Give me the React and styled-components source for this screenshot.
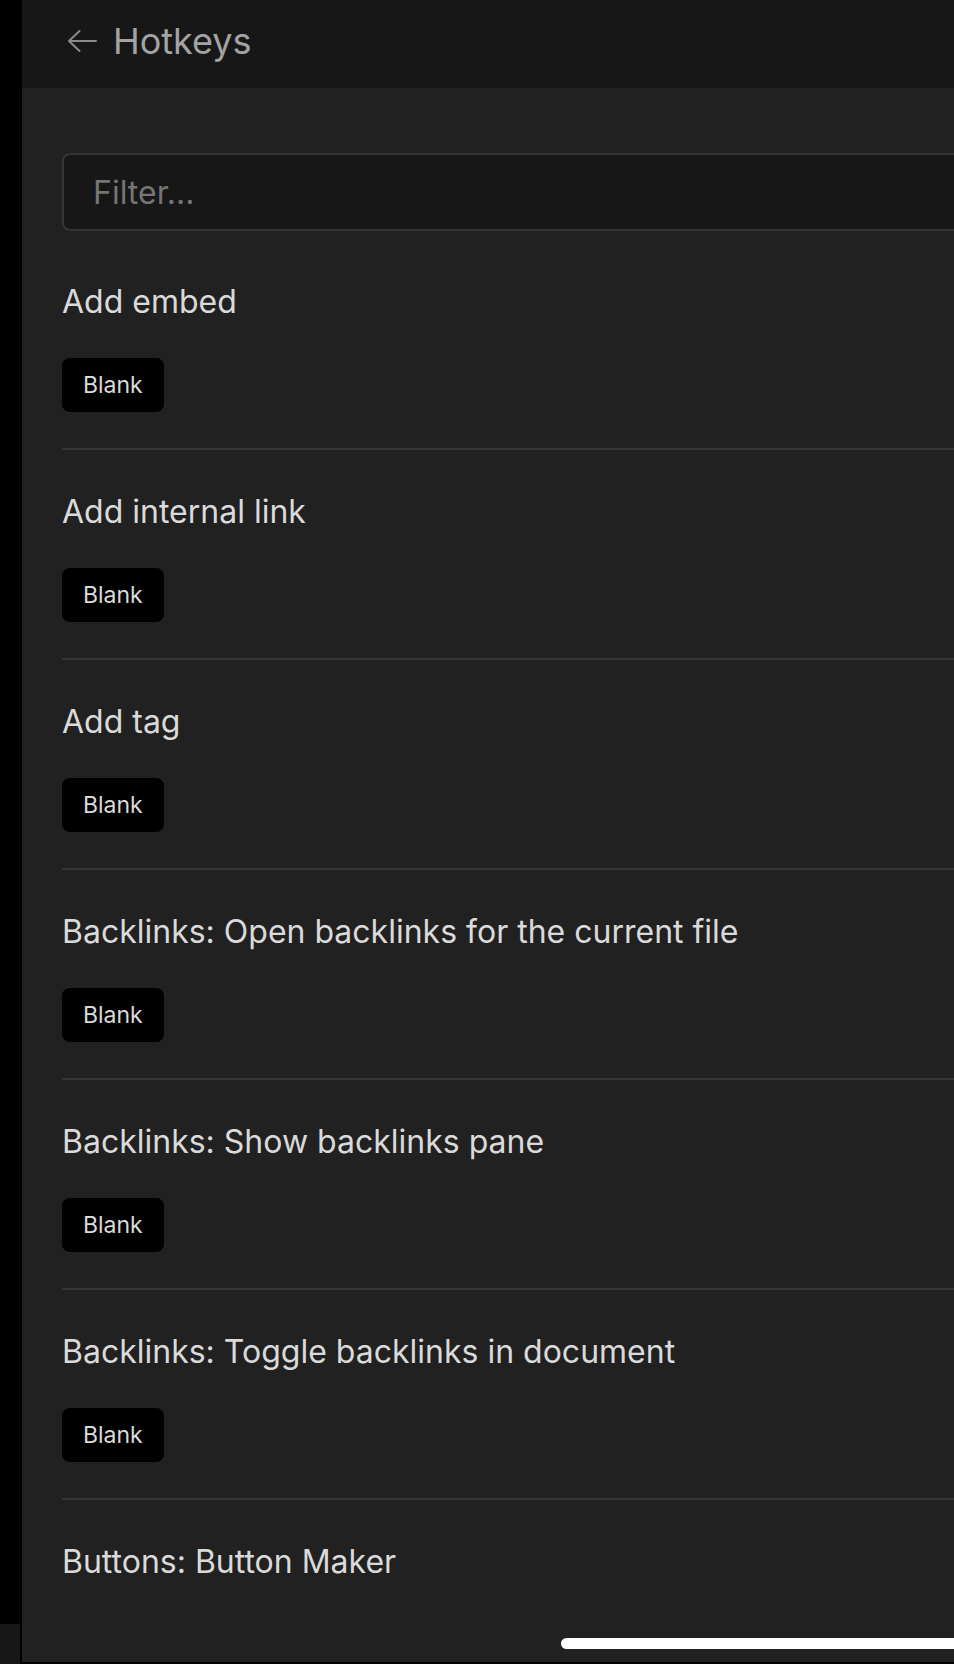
import styled, { createGlobalStyle } from 'styled-components'

const GlobalStyle = createGlobalStyle`
  html, body {
    margin: 0;
    padding: 0;
    background: #000;
    overflow: hidden;
  }
  body {
    font-family: Inter, "Noto Sans", sans-serif;
  }
`

const Screen = styled.div`
  display: flex;
  width: 954px;
  height: 1664px;
  background: #000;
  overflow: hidden;
  position: relative;
`

const Rail = styled.div`
  width: 22px;
  flex-shrink: 0;
  display: flex;
  flex-direction: column;
  justify-content: flex-end;
  .rail-foot {
    width: 20px;
    height: 40px;
    background: #171717;
  }
`

const Panel = styled.div`
  width: 1100px;
  flex-shrink: 0;
  height: 1662px;
  background: #212121;
  display: flex;
  flex-direction: column;
  overflow: hidden;
`

const Header = styled.div`
  flex-shrink: 0;
  height: 88px;
  box-sizing: border-box;
  background: #171717;
  display: flex;
  align-items: flex-start;
  padding: 19px 0 0 45px;
  .head-row {
    display: flex;
    align-items: center;
    gap: 16px;
    height: 44px;
  }
  h1 {
    margin: 0;
    font-size: 36px;
    line-height: 44px;
    font-weight: 400;
    color: #a3a3a3;
  }
`

const Content = styled.div`
  flex-shrink: 0;
  padding-left: 40px;
  display: flex;
  flex-direction: column;
`

const Filter = styled.input`
  flex-shrink: 0;
  margin-top: 65px;
  margin-bottom: 9px;
  height: 78px;
  box-sizing: border-box;
  width: 100%;
  background: #171717;
  border: 2px solid #363636;
  border-radius: 8px;
  padding: 0 29px;
  font-family: Inter, "Noto Sans", sans-serif;
  font-size: 32px;
  color: #dadada;
  outline: none;
  ::placeholder {
    color: #6b6b6b;
  }
`

const Item = styled.div`
  flex-shrink: 0;
  padding: 42px 0 36px;
  border-bottom: 2px solid ${p => (p.$last ? 'transparent' : '#363636')};
  display: flex;
  flex-direction: column;
  align-items: flex-start;
  gap: 36px;
  .item-name {
    font-size: 32px;
    line-height: 40px;
    color: #dadada;
  }
`

const KeyButton = styled.button`
  height: 54px;
  box-sizing: border-box;
  padding: 0 21px;
  display: flex;
  align-items: center;
  background: #000;
  border: none;
  border-radius: 8px;
  font-family: Inter, "Noto Sans", sans-serif;
  font-size: 23px;
  color: #dadada;
`

const HomeBar = styled.div`
  position: absolute;
  left: 561px;
  top: 1638px;
  width: 420px;
  height: 11px;
  border-radius: 6px;
  background: #fff;
`

const BackArrow = () => (
  <svg width="30" height="22" viewBox="0 0 30 22" fill="none">
    <path
      d="M2 11h27M12.5 1L2 11l10.5 10"
      stroke="#8a8a8a"
      strokeWidth="2"
      strokeLinecap="round"
      strokeLinejoin="round"
    />
  </svg>
)

// the last row's key sits below the fold, so it is not shown
const commands = [
  { name: 'Add embed', key: 'Blank' },
  { name: 'Add internal link', key: 'Blank' },
  { name: 'Add tag', key: 'Blank' },
  { name: 'Backlinks: Open backlinks for the current file', key: 'Blank' },
  { name: 'Backlinks: Show backlinks pane', key: 'Blank' },
  { name: 'Backlinks: Toggle backlinks in document', key: 'Blank' },
  { name: 'Buttons: Button Maker', key: null },
]

export default function App() {
  return (
    <>
      <GlobalStyle />
      <Screen>
        <Rail>
          <div className="rail-foot" />
        </Rail>
        <Panel>
          <Header>
            <div className="head-row">
              <BackArrow />
              <h1>Hotkeys</h1>
            </div>
          </Header>
          <Content>
            <Filter type="text" placeholder="Filter..." />
            {commands.map((cmd, i) => (
              <Item key={cmd.name} $last={i === commands.length - 1}>
                <div className="item-name">{cmd.name}</div>
                {cmd.key && <KeyButton>{cmd.key}</KeyButton>}
              </Item>
            ))}
          </Content>
        </Panel>
        <HomeBar />
      </Screen>
    </>
  )
}
